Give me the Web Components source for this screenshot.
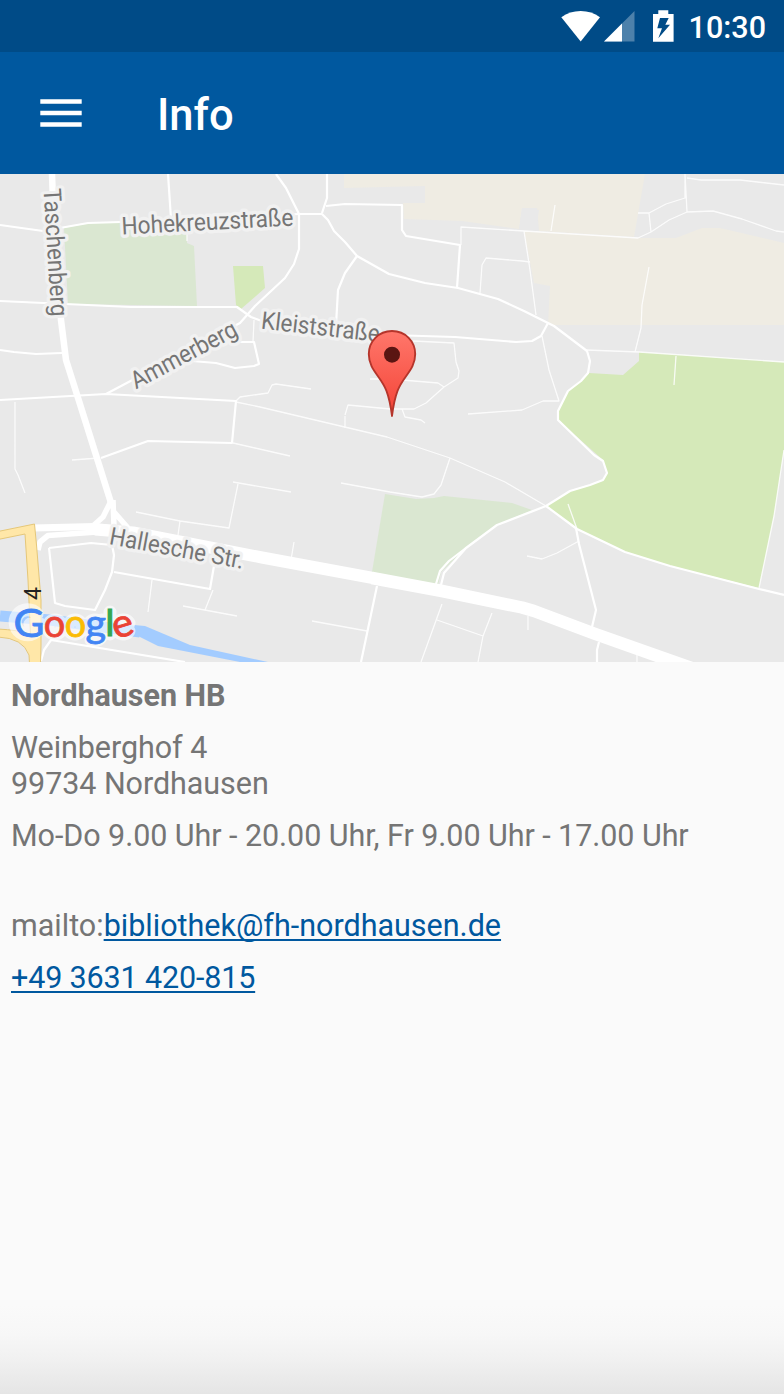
<!DOCTYPE html>
<html lang="de">
<head>
<meta charset="utf-8">
<title>Info</title>
<style>
html, body { margin: 0; height: 100%; }
body { font-family: Roboto, "Liberation Sans", sans-serif; background: #fafafa; overflow: hidden; }
</style>
</head>
<body>
<info-screen>
  <status-bar slot="top">10:30</status-bar>
  <app-bar slot="top">Info</app-bar>
  <location-map></location-map>
  <library-info>
    <info-line><b>Nordhausen HB</b></info-line>
    <info-line>Weinberghof 4<br>99734 Nordhausen</info-line>
    <info-line>Mo-Do 9.00 Uhr - 20.00 Uhr, Fr 9.00 Uhr - 17.00 Uhr</info-line>
    <info-line gap>mailto:<contact-link>bibliothek@fh-nordhausen.de</contact-link></info-line>
    <info-line><contact-link phone>+49 3631 420-815</contact-link></info-line>
  </library-info>
</info-screen>
<script>
const define = (name, html) => customElements.define(name, class extends HTMLElement {
  constructor() {
    super();
    this.attachShadow({ mode: 'open' }).innerHTML = html;
  }
});

define('info-screen', `
<style>
:host { display: flex; flex-direction: column; width: 100%; height: 1394px; background: linear-gradient(#fafafa 0 1305px, #f7f7f7 1335px, #f1f1f1 1358px, #e5e5e5 1394px); }
</style>
<slot name="top"></slot><slot></slot>`);

define('status-bar', `
<style>
:host { display: flex; align-items: center; justify-content: flex-end; box-sizing: border-box; height: 52px; flex: none; padding-right: 18px; background: #004b87; color: #fff; font-weight: 500; font-size: 30.5px; line-height: 52px; }
svg { display: block; width: 130px; height: 52px; flex: none; }
.time { padding-top: 4px; }
</style>
<svg viewBox="559 0 130 52" fill="#fff">
  <path d="M561.3 17.3Q569.800 11 580.700 11Q591.600 11 600 17.300L580.700 41.500Z"/>
  <path d="M604 41.500L634.500 11V41.500Z" opacity=".3"/>
  <path d="M604 41.500L622 23.500V41.500Z"/>
  <path fill-rule="evenodd" d="M653 14H658.300V10.300H668.300V14H673.600V41.700H653ZM660 18L657.300 28.300H662L658.300 38.300L670 24.700H665.300L668.700 18Z"/>
</svg>
<span class="time"><slot></slot></span>`);

define('app-bar', `
<style>
:host { display: flex; align-items: center; height: 122px; flex: none; background: #00589f; color: #fff; padding-left: 40px; gap: 75px; }
svg { display: block; width: 42px; height: 28px; }
.title { font-size: 43.5px; font-weight: 500; line-height: 52px; padding-top: 6px; }
</style>
<svg viewBox="0 0 42 28" fill="#fff"><path d="M.3.300H41.700V4.700H.3ZM.3 11.700H41.700V16.300H.3ZM.3 23.300H41.700V27.700H.3Z"/></svg>
<span class="title"><slot></slot></span>`);

define('location-map', `
<style>
:host { display: block; height: 488px; flex: none; overflow: hidden; background: #e9e9e9; }
svg { display: block; width: 784px; height: 488px; }
.roads path { fill: none; stroke: #fff; stroke-linejoin: round; }
.label { font-size: 24.5px; fill: #757575; stroke: #f1f1f1; stroke-width: 7px; paint-order: stroke; stroke-linejoin: round; }
.logo { font-family: Lato, sans-serif; font-weight: 400; font-size: 39px; stroke-width: .8px; }
.logo text { stroke: currentColor; fill: currentColor; }
.halo { fill: none; stroke: #fff; stroke-opacity: .6; stroke-linecap: round; stroke-linejoin: round; }
</style>
<svg viewBox="0 174 784 488">
  <defs><linearGradient id="pin" x1="0" y1="0" x2="0" y2="1"><stop stop-color="#ff776b"/><stop offset="1" stop-color="#f44336"/></linearGradient></defs>
  <g fill="#efece3">
    <path d="M344 174H645L634 237L539 231L537 208L522 208L519 229L462 221L404 219L403 203H425V186L344 188Z"/>
    <path d="M524 231L638 238L676 238L702 228L720 228L784 243V325H548L550 286L534 283Z"/>
  </g>
  <path fill="#e9e9e9" d="M522 208L539 210L536 232L519 230Z"/>
  <g fill="#dae7d1">
    <path d="M64 228L90 223L187 221L187 243L194 246L197 306L68 304Z"/>
    <path d="M385 494L416 499L434 498L444 496L512 503L532 510L500 524L466 548L441 572L438 585L372 572Z"/>
  </g>
  <g fill="#d5e9b9">
    <path d="M233 266H263L265 288L241 309L236 305Z"/>
    <path d="M639 352L784 362V450L774 516L759 588L670 566L625 552L578 529L546 506L570 491L602 481L607 473L603 460L558 420V411L568 391L589 373L623 375L639 361Z"/>
  </g>
  <path fill="none" stroke="#a3ccff" stroke-width="11" d="M0 616L50 620L140 632"/>
  <path fill="#a3ccff" d="M134 625L145 626L190 645L268 662H240L158 646L134 634Z"/>
  <g class="roads">
    <path stroke-width="6.500" d="M52 174L54 230L61 320L66 360L79 401L112 506"/>
    <path stroke-width="7" d="M34 528L95 526.500L118 529"/>
    <path stroke-width="12" d="M95 529.500L133 532.500L262 557.500L373 578"/>
    <path stroke-width="12.500" d="M372 578L442 591L522 607.500L534 611L594 633.500L700 671"/>
    <path stroke-width="5.500" d="M38 550L40 542L48 535.500L97 532L130 535"/>
    <path stroke-width="5.500" d="M111 501L103 517L94 525M113 500L114 526M114 512L128 528"/>
    <g stroke-width="2.200">
      <path d="M0 225L43 231L88 223L187 220L299 214L322 214L328 220L334 231L345 242L357 256L389 274L425 283L458 288L498 299L524 311L554 326L587 351L590 361L588 373L581 381L568 391L558 411V420L594 455L603 461L607 473L603 480L590 485L570 491L546 506L497 525L466 548L444 573L441 585"/>
      <path d="M466 548L449 561L440 571L436 584M276 174L286 188L299 214V249L294 264L285 278L270 292L255 306L240 323L106 394M168 174L171 219M327 174V198L322 213M326 206L345 204L402 205V230L406 236L460 245L457 288M357 256L345 273L338 290L336 325"/>
      <path d="M0 301L131 307H237L251 317L278 327L390 335L455 337L516 342L532 341L541 336L548 323"/>
      <path d="M546 506L577 529L625 552L670 566L759 589L784 595"/>
      <path d="M0 350L14 352L36 354L62 353M0 400L106 394L236 401L232 443L148 441L101 458M192 361L216 363L235 368L254 366L259 364L254 342H236"/>
      <path d="M377 586L361 662M49 548L91 543L112 545L114 555L112 572L105 590L95 610L65 606L55 603L49 548M114 572L210 589L215 560M41 661L44 650L51 640L185 662M576 528L579 544L596 610L592 627M599 642L597 650V662"/>
    </g>
    <g stroke-width="1.300" opacity=".85">
      <path d="M461 245V227L524 231L638 238L651 232L669 220L687 212L713 211L742 219L776 231L784 232M638 213H649L666 204L685 198V174L687 212M649 213L651 232M687 178L701 180H740L784 185M524 231L530 270L536 315M555 205L551 231M649 267L642 305L641 328L635 352M586 350L639 352L784 362M676 356L674 385M542 336L549 370L559 401H543L522 410L468 414"/>
      <path d="M480 293L482 265L486 258L522 261L530 262M413 341L454 343L456 362L459 371L458 378L444 387L426 403L414 409L390 409L348 405L345 415M370 379H390L438 383L444 387M402 409L405 417L421 420L425 423M236 401L240 397L268 393L272 385L276 384L311 389M236 402L260 407L387 437L450 458L505 482L546 506M450 458L441 485L434 494L422 497L390 492L341 483M345 416L345 428"/>
      <path d="M15 402V469L18 475L25 493M72 460L99 458M136 512L180 521L229 528L238 484M180 521L178 535M233 482L291 492M233 443L290 456M183 606L237 616M213 590L205 610M152 580L148 612M312 621L367 631M294 542L291 560M442 604L421 662M437 620L483 636L492 613M483 636L478 662M568 504L577 529M527 556L542 559L557 553L579 541M784 450L774 516L759 588M528 616V630M637 655V662M254 320L253 342M187 221V241"/>
    </g>
  </g>
  <path fill="#ffe7a8" stroke="#e5c779" stroke-width="1" d="M-2 531.500L34.500 524L36.500 545L41 600L41 645L40.500 664H29.500L29 655Q23 638 -2 637V629Q18 630 30.500 634L28 580L25 534L-2 539.500Z"/>
  <text class="label" transform="translate(122 234.500) rotate(-3)" textLength="172" lengthAdjust="spacingAndGlyphs">Hohekreuzstraße</text>
  <text class="label" transform="translate(43.500 189) rotate(86.500)" textLength="128" lengthAdjust="spacingAndGlyphs">Taschenberg</text>
  <text class="label" transform="translate(136 389.500) rotate(-28)" textLength="117" lengthAdjust="spacingAndGlyphs">Ammerberg</text>
  <text class="label" transform="translate(260.500 328.500) rotate(6.500)" textLength="119" lengthAdjust="spacingAndGlyphs">Kleiststraße</text>
  <text class="label" transform="translate(108.500 544) rotate(10.500)" textLength="136" lengthAdjust="spacingAndGlyphs">Hallesche Str.</text>
  <text transform="translate(40.500 600) rotate(-90)" font-size="23" fill="#222">4</text>
  <path class="halo" stroke-width="13" d="M37 614A12.500 12.500 0 1 0 40 624H30M48 627A7 7 0 1 0 62 627A7 7 0 1 0 48 627M68 627A7 7 0 1 0 82 627A7 7 0 1 0 68 627M102 620V634Q101 642 91 640M88 627A7 7 0 1 0 102 627A7 7 0 1 0 88 627M110 612V634M129 631A7 7 0 1 1 129 623L119 628"/>
  <g class="logo">
    <text color="#4285f4" x="13.500" y="636.500" textLength="31" lengthAdjust="spacingAndGlyphs">G</text>
    <text color="#ea4335" x="43.800" y="636.500" textLength="21.500" lengthAdjust="spacingAndGlyphs">o</text>
    <text color="#fbbc05" x="64.800" y="636.500" textLength="21.500" lengthAdjust="spacingAndGlyphs">o</text>
    <text color="#4285f4" x="85.500" y="636.500" textLength="20.500" lengthAdjust="spacingAndGlyphs">g</text>
    <text color="#34a853" x="105.500" y="636" font-size="37" stroke-width="1.200">l</text>
    <text color="#ea4335" transform="rotate(-17 123.500 627)" x="112.500" y="636.500" textLength="21" lengthAdjust="spacingAndGlyphs">e</text>
  </g>
  <path fill="url(#pin)" stroke="#b5352b" stroke-width="1.900" stroke-linejoin="round" d="M392 331C378.500 331 368.800 341.500 368.800 354C368.800 370 381 376 386.500 391C389.500 399 391 408 392 416C393 408 394.500 399 397.500 391C403 376 415.200 370 415.200 354C415.200 341.500 405.500 331 392 331Z"/>
  <circle cx="392" cy="354.700" r="8" fill="#5a1512"/>
</svg>`);

define('library-info', `
<style>
:host { display: flex; flex-direction: column; gap: 16px; padding: 16px 11px; color: #757575; font-size: 30.5px; line-height: 36px; letter-spacing: -.06px; }
</style>
<slot></slot>`);

define('info-line', `
<style>
:host { display: block; white-space: nowrap; }
:host([gap]) { margin-top: 38px; letter-spacing: 0; }
</style>
<slot></slot>`);

define('contact-link', `<style>
:host { display: inline; color: #00589f; text-decoration: underline; text-decoration-thickness: 2px; text-underline-offset: 3px; text-decoration-skip-ink: none; }
:host([phone]) { letter-spacing: -.15px; }
</style><slot></slot>`);
</script>
</body>
</html>
